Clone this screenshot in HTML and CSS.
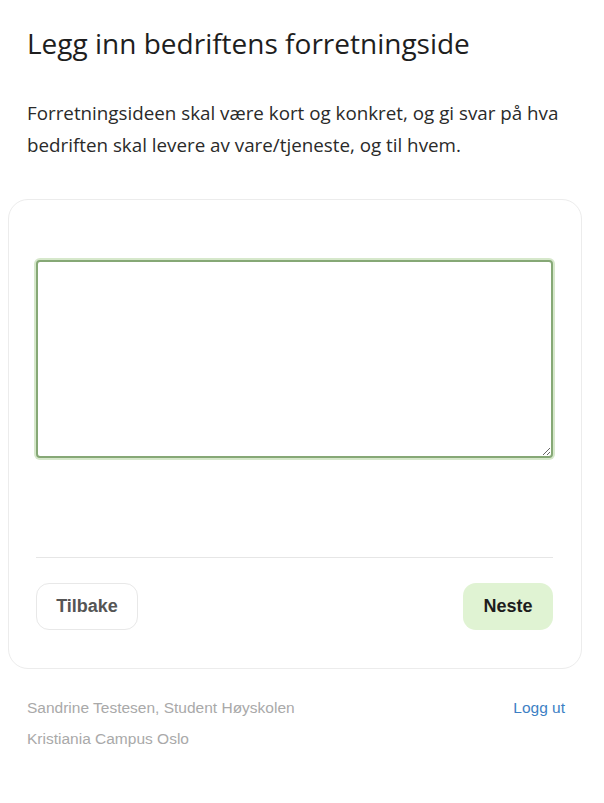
FILE: index.html
```html
<!DOCTYPE html>
<html lang="no">
<head>
<meta charset="utf-8">
<title>Forretningside</title>
<link rel="stylesheet" href="styles.css">
</head>
<body>
<main class="page">
  <h1 class="title">Legg inn bedriftens forretningside</h1>
  <p class="intro">Forretningsideen skal være kort og konkret, og gi svar på hva bedriften skal levere av vare/tjeneste, og til hvem.</p>
  <section class="card">
    <textarea class="idea"></textarea>
    <hr class="divider">
    <div class="actions">
      <button class="btn btn-back" type="button">Tilbake</button>
      <button class="btn btn-next" type="button">Neste</button>
    </div>
  </section>
  <footer class="footer">
    <div class="who">
      <div>Sandrine Testesen, Student Høyskolen</div>
      <div>Kristiania Campus Oslo</div>
    </div>
    <a class="logout" href="#">Logg ut</a>
  </footer>
</main>
</body>
</html>
```

FILE: styles.css
```css
html, body {
  margin: 0;
  background: #ffffff;
}
body {
  font-family: "Open Sans", "Liberation Sans", sans-serif;
  color: #222;
}
.page {
  padding: 25px 40px 0 27px;
}
.title {
  margin: 0;
  font-size: 28px;
  font-weight: 400;
  line-height: 36px;
  color: #1e1e1e;
}
.intro {
  margin: 37px -20px 0 0;
  font-size: 18.8px;
  line-height: 31.5px;
  color: #2a2a2a;
}
.card {
  margin: 38px -18px 0 -19px;
  border: 1px solid #ececec;
  border-radius: 20px;
  padding: 60px 28px 38px 27px;
  display: flex;
  flex-direction: column;
}
.idea {
  display: block;
  box-sizing: border-box;
  width: 100%;
  height: 198px;
  margin: 0;
  border: 2px solid #86a876;
  border-radius: 4px;
  box-shadow: 0 0 0 2px #d6e8cb;
  resize: vertical;
  font-family: inherit;
  outline: none;
}
.divider {
  margin: 99px 0 0 0;
  border: none;
  border-top: 1.5px solid #e6e6e6;
  height: 0;
}
.actions {
  margin-top: 25px;
  display: flex;
  justify-content: space-between;
  align-items: center;
}
.btn {
  font-family: "Liberation Sans", sans-serif;
  font-size: 18px;
  font-weight: 700;
  height: 47px;
  border-radius: 13px;
  cursor: pointer;
}
.btn-back {
  width: 102px;
  background: #fff;
  border: 1px solid #e8e8e8;
  color: #555;
}
.btn-next {
  width: 90px;
  background: #e0f3d3;
  border: none;
  color: #1d1d1d;
}
.footer {
  margin-top: 23px;
  display: flex;
  justify-content: space-between;
  align-items: flex-start;
  font-family: "Liberation Sans", sans-serif;
  font-size: 15.5px;
  line-height: 31px;
}
.who {
  color: #a9a9a9;
}
.logout {
  color: #3d7fc4;
  text-decoration: none;
  margin-right: -1px;
}
```
